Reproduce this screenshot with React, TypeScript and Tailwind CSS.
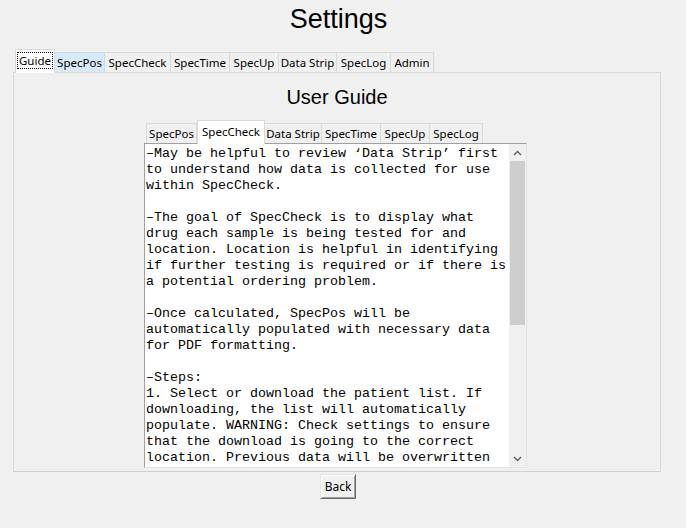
import React from "react";

type Tab = { label: string; w: string; selected?: boolean; hover?: boolean; focus?: boolean };

const outerTabs: Tab[] = [
  { label: "Guide", w: "w-[40px]", selected: true, focus: true },
  { label: "SpecPos", w: "w-[50px]", hover: true },
  { label: "SpecCheck", w: "w-[66px]" },
  { label: "SpecTime", w: "w-[59px]" },
  { label: "SpecUp", w: "w-[49px]" },
  { label: "Data Strip", w: "w-[58px]" },
  { label: "SpecLog", w: "w-[54px]" },
  { label: "Admin", w: "w-[43px]" },
];

const innerTabs: Tab[] = [
  { label: "SpecPos", w: "w-[51px]" },
  { label: "SpecCheck", w: "w-[68px]", selected: true },
  { label: "Data Strip", w: "w-[57px]" },
  { label: "SpecTime", w: "w-[59px]" },
  { label: "SpecUp", w: "w-[49px]" },
  { label: "SpecLog", w: "w-[53px]" },
];

const guideLines = [
  "–May be helpful to review ‘Data Strip’ first",
  "to understand how data is collected for use",
  "within SpecCheck.",
  "",
  "–The goal of SpecCheck is to display what",
  "drug each sample is being tested for and",
  "location. Location is helpful in identifying",
  "if further testing is required or if there is",
  "a potential ordering problem.",
  "",
  "–Once calculated, SpecPos will be",
  "automatically populated with necessary data",
  "for PDF formatting.",
  "",
  "–Steps:",
  "1. Select or download the patient list. If",
  "downloading, the list will automatically",
  "populate. WARNING: Check settings to ensure",
  "that the download is going to the correct",
  "location. Previous data will be overwritten",
];

function TabButton({ tab, first }: { tab: Tab; first: boolean }) {
  const base = "flex items-center justify-center border-t border-r text-[11.5px] whitespace-nowrap";
  const left = first ? "border-l" : "";
  if (tab.selected) {
    return (
      <div
        className={`${base} ${left} ${tab.w} relative z-10 -mb-px h-[24px] pb-[3px] bg-white border-[#d9d9d9] border-l`}
      >
        <span
          className={
            tab.focus ? "outline outline-1 outline-dotted outline-black px-[1px] leading-[15px]" : "leading-[15px]"
          }
        >
          {tab.label}
        </span>
      </div>
    );
  }
  return (
    <div
      className={`${base} ${left} ${tab.w} h-[20px] ${
        tab.hover ? "bg-[#d8eaf9] border-[#c5dcf0]" : "bg-[#f0f0f0] border-[#d9d9d9]"
      }`}
    >
      {tab.label}
    </div>
  );
}

function Chevron({ down }: { down?: boolean }) {
  return (
    <div className="h-[17px] flex items-center justify-center">
      <svg width="9" height="6" viewBox="0 0 9 6">
        <polyline
          points={down ? "1,1 4.5,4.5 8,1" : "1,5 4.5,1.5 8,5"}
          fill="none"
          stroke="#606060"
          strokeWidth="1.4"
        />
      </svg>
    </div>
  );
}

export default function App() {
  return (
    <div className="w-[686px] h-[528px] bg-[#f0f0f0] overflow-hidden text-black font-['Noto_Sans',sans-serif]">
      <div className="w-[674px]">
        <h1 className="h-[49px] pt-[4px] pl-[3px] text-center font-['Liberation_Sans',Arial,sans-serif] text-[27px] leading-[31px]">
          Settings
        </h1>
        <div className="mx-[13px]">
          <div className="flex items-end h-[23px] pl-[2px]">
            {outerTabs.map((t, i) => (
              <TabButton key={t.label} tab={t} first={i === 0} />
            ))}
          </div>
          <div className="h-[400px] border border-[#d9d9d9] border-b-[#cfcfcf]">
            <h2 className="h-[48px] pt-[13px] text-center font-['Liberation_Sans',Arial,sans-serif] text-[20px] leading-[23px]">
              User Guide
            </h2>
            <div className="ml-[130px] w-[383px]">
              <div className="flex items-end h-[22px] pl-[2px]">
                {innerTabs.map((t, i) => (
                  <TabButton key={t.label} tab={t} first={i === 0} />
                ))}
              </div>
              <div className="h-[325px] flex bg-white border border-t-[#a0a0a0] border-l-[#a0a0a0] border-r-[#e3e3e3] border-b-[#e3e3e3]">
                <div className="flex-1 overflow-hidden pl-[1px] pt-[2px] font-['Liberation_Mono','Courier_New',monospace] text-[13.33px] leading-[16px] whitespace-pre">
                  {guideLines.map((l, i) => (
                    <div key={i} className="h-[16px]">
                      {l}
                    </div>
                  ))}
                </div>
                <div className="w-[17px] bg-[#f0f0f0] flex flex-col">
                  <Chevron />
                  <div className="flex-1 px-[1px]">
                    <div className="h-[164px] bg-[#cdcdcd]" />
                  </div>
                  <Chevron down />
                </div>
              </div>
            </div>
          </div>
        </div>
        <div className="flex justify-center pt-[2px] pl-[2px]">
          <button className="w-[36px] h-[25px] text-[12px] bg-[#f0f0f0] border border-t-[#e3e3e3] border-l-[#e3e3e3] border-r-[#696969] border-b-[#696969] shadow-[inset_1px_1px_0_#ffffff,inset_-1px_-1px_0_#a0a0a0]">
            Back
          </button>
        </div>
      </div>
    </div>
  );
}
